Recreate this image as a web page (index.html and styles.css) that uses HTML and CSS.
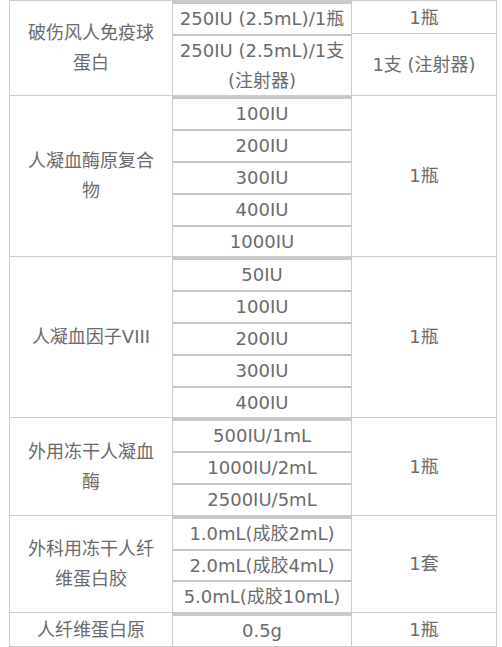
FILE: index.html
```html
<!DOCTYPE html>
<html lang="zh">
<head>
<meta charset="utf-8">
<title>产品规格</title>
<link rel="stylesheet" href="styles.css">
</head>
<body>
<table class="spec">
  <colgroup>
    <col class="c-name">
    <col class="c-spec">
    <col class="c-unit">
  </colgroup>
  <tr>
    <td class="name">破伤风人免疫球蛋白</td>
    <td class="specs">
      <table class="inner">
        <tr><td>250IU (2.5mL)/1瓶</td></tr>
        <tr><td>250IU (2.5mL)/1支<br>(注射器)</td></tr>
      </table>
    </td>
    <td class="unit split">
      <div class="u1">1瓶</div>
      <div class="u2">1支 (注射器)</div>
    </td>
  </tr>
  <tr>
    <td class="name">人凝血酶原复合物</td>
    <td class="specs">
      <table class="inner">
        <tr><td>100IU</td></tr>
        <tr><td>200IU</td></tr>
        <tr><td>300IU</td></tr>
        <tr><td>400IU</td></tr>
        <tr><td>1000IU</td></tr>
      </table>
    </td>
    <td class="unit">1瓶</td>
  </tr>
  <tr>
    <td class="name">人凝血因子VIII</td>
    <td class="specs">
      <table class="inner">
        <tr><td>50IU</td></tr>
        <tr><td>100IU</td></tr>
        <tr><td>200IU</td></tr>
        <tr><td>300IU</td></tr>
        <tr><td>400IU</td></tr>
      </table>
    </td>
    <td class="unit">1瓶</td>
  </tr>
  <tr>
    <td class="name">外用冻干人凝血酶</td>
    <td class="specs">
      <table class="inner">
        <tr><td>500IU/1mL</td></tr>
        <tr><td>1000IU/2mL</td></tr>
        <tr><td>2500IU/5mL</td></tr>
      </table>
    </td>
    <td class="unit">1瓶</td>
  </tr>
  <tr>
    <td class="name">外科用冻干人纤维蛋白胶</td>
    <td class="specs">
      <table class="inner">
        <tr><td>1.0mL(成胶2mL)</td></tr>
        <tr><td>2.0mL(成胶4mL)</td></tr>
        <tr><td>5.0mL(成胶10mL)</td></tr>
      </table>
    </td>
    <td class="unit">1套</td>
  </tr>
  <tr>
    <td class="name">人纤维蛋白原</td>
    <td class="specs">
      <table class="inner">
        <tr><td>0.5g</td></tr>
      </table>
    </td>
    <td class="unit">1瓶</td>
  </tr>
</table>
</body>
</html>
```

FILE: styles.css
```css
html, body {
  background: #ffffff;
}

body {
  margin: 0 0 0 9px;
  font-family: "DejaVu Sans", "Noto Sans CJK SC", sans-serif;
  font-size: 18px;
  color: #6b6b6b;
}

.spec {
  border-collapse: collapse;
  table-layout: fixed;
  width: 487px;
}

.c-name { width: 163px; }
.c-spec { width: 179px; }
.c-unit { width: 145px; }

.spec > tbody > tr > td {
  border: 1px solid #cccccc;
  vertical-align: middle;
  text-align: center;
  line-height: 30px;
  padding: 0 10px;
}

.spec > tbody > tr > td.specs {
  padding: 0;
  vertical-align: top;
}

.inner {
  width: 100%;
  border-collapse: collapse;
  border-top: 3px solid #c8c8c8;
}

.inner td {
  padding: 0;
  text-align: center;
  line-height: 29.8px;
  border-bottom: 2px solid #c8c8c8;
}

.inner tr:last-child td {
  border-bottom: none;
}

.spec > tbody > tr > td.split {
  padding: 0;
  vertical-align: top;
}

.split .u1 {
  height: 30px;
  line-height: 30px;
  padding-top: 2px;
  border-bottom: 1px solid #cccccc;
}

.split .u2 {
  height: 61px;
  line-height: 61px;
}
```
